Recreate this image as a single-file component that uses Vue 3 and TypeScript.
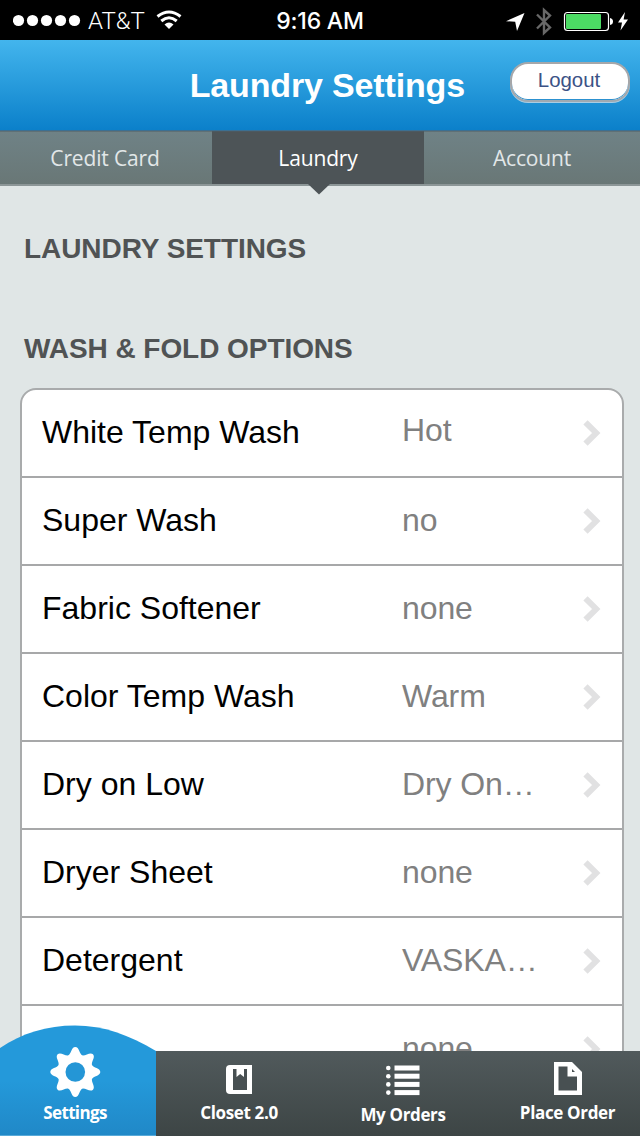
<script setup lang="ts">
interface Row { label: string; value: string }

const tabs: string[] = ['Credit Card', 'Laundry', 'Account']
const rows: Row[] = [
  { label: 'White Temp Wash', value: 'Hot' },
  { label: 'Super Wash', value: 'no' },
  { label: 'Fabric Softener', value: 'none' },
  { label: 'Color Temp Wash', value: 'Warm' },
  { label: 'Dry on Low', value: 'Dry On…' },
  { label: 'Dryer Sheet', value: 'none' },
  { label: 'Detergent', value: 'VASKA…' },
  { label: '', value: 'none' },
]
const petals: number[] = [0, 45, 90, 135, 180, 225, 270, 315]
</script>

<template>
  <div class="screen">
    <div class="status">
      <div class="carrier">
        <svg width="70" height="40" viewBox="0 0 70 40" fill="#fff">
          <circle v-for="n in 5" :key="n" :cx="n * 14 - 8.5" cy="20.5" r="5.6" />
        </svg>
        <span class="network">AT&amp;T</span>
        <svg class="wifi" width="26" height="40" viewBox="0 0 26 40" fill="none" stroke="#fff" stroke-width="3">
          <path d="M1.5 16.5Q13 7.5 24.5 16.5" />
          <path d="M5.3 21Q13 14.5 20.7 21" />
          <path d="M8.5 24.5Q13 20.7 17.5 24.5L13 29Z" fill="#fff" stroke="none" />
        </svg>
      </div>
      <span class="time">9:16 AM</span>
      <svg class="indicators" width="134" height="40" viewBox="506 0 134 40">
        <path d="M506 20.2L524.5 12L517 30L515.2 20.8Z" fill="#fff" />
        <path d="M537 13.5L550 26.5L544 32V9L550 14.5L537 27.5" fill="none" stroke="#686868" stroke-width="2.4" />
        <rect x="564.5" y="11.5" width="44" height="18" rx="3" fill="none" stroke="#fff" stroke-width="1.2" />
        <rect x="566" y="13" width="35" height="15" rx="1" fill="#4cdb64" />
        <path d="M610 17Q613 17.5 613 20.5Q613 23.5 610 24Z" fill="#fff" />
        <path d="M625 11L618 21.5H622L620.5 29.5L628 18.6H623.6Z" fill="#fff" />
      </svg>
    </div>

    <header class="header">
      <h1>Laundry Settings</h1>
      <button class="logout">Logout</button>
    </header>

    <nav class="tabs">
      <div v-for="(tab, i) in tabs" :key="tab" class="tab" :class="{ active: i === 1 }">
        <span>{{ tab }}</span>
        <svg v-if="i === 1" class="pointer" width="22" height="11" viewBox="0 0 22 11">
          <path d="M0 0H22L11 10.5Z" fill="#4d5457" />
        </svg>
      </div>
    </nav>

    <main class="content">
      <h2>LAUNDRY SETTINGS</h2>
      <h2 class="second">WASH &amp; FOLD OPTIONS</h2>
      <div class="list">
        <div v-for="(row, i) in rows" :key="i" class="row">
          <span class="label">{{ row.label }}</span>
          <span class="value">{{ row.value }}</span>
          <svg width="20" height="28" viewBox="0 0 20 28">
            <path d="M3.5 3.3L14.2 14L3.5 24.7" fill="none" stroke="#e1e1e2" stroke-width="6" />
          </svg>
        </div>
      </div>
    </main>

    <footer class="bottom">
      <div class="item settings">
        <svg class="dome" width="156" height="111" viewBox="0 0 156 111">
          <defs>
            <linearGradient id="blue" x1="0" y1="0" x2="0" y2="1">
              <stop offset="0" stop-color="#2499da" />
              <stop offset=".5" stop-color="#2499da" />
              <stop offset="1" stop-color="#2088c7" />
            </linearGradient>
          </defs>
          <path d="M0 23C22 8 47 .5 75 .5C104 .5 129 10 156 26V111H0Z" fill="url(#blue)" />
          <path d="M0 110.5H156" stroke="#58aad9" />
          <g transform="translate(75.3 47)">
            <path
              v-for="a in petals" :key="a" :transform="'rotate(' + a + ')'"
              d="M-7.2 -16.5C-4 -18 -4 -25 0 -25C4 -25 4 -18 7.2 -16.5L0 0Z" fill="#fff"
            />
            <circle r="17" fill="#fff" />
            <circle r="9.8" fill="#2496d6" />
          </g>
        </svg>
        <span class="nav-label">Settings</span>
      </div>
      <div class="item closet">
        <svg width="26" height="30" viewBox="0 0 26 30">
          <path d="M4 0H26V29H4Q0 29 0 25V4Q0 0 4 0Z" fill="#fff" />
          <path d="M7 4H10.5V12L14.2 9L18 12V4H21V25H7Z" fill="#485052" />
        </svg>
        <span class="nav-label">Closet 2.0</span>
      </div>
      <div class="item orders">
        <svg width="35" height="31" viewBox="0 0 35 31" fill="#fff">
          <g v-for="n in 4" :key="n" :transform="'translate(0 ' + (n - 1) * 8.2 + ')'">
            <circle cx="2.3" cy="3" r="2.3" />
            <rect x="8.5" y=".5" width="25" height="5" />
          </g>
        </svg>
        <span class="nav-label">My Orders</span>
      </div>
      <div class="item place">
        <svg width="28" height="33" viewBox="0 0 28 33">
          <path d="M0 0H18L28 10V33H0Z" fill="#fff" />
          <path d="M4.5 4.5H13.5V14.5H23V28.5H4.5Z" fill="#485052" />
          <path d="M18 7L21 10H18Z" fill="#485052" />
        </svg>
        <span class="nav-label">Place Order</span>
      </div>
    </footer>
  </div>
</template>

<style>
body { margin: 0; overflow: hidden; }
</style>

<style scoped>
.screen {
  position: relative;
  width: 640px;
  height: 1136px;
  overflow: hidden;
  display: flex;
  flex-direction: column;
  background: #e0e6e6;
  font-family: "Liberation Sans", Arial, sans-serif;
}
.status {
  height: 40px;
  flex: none;
  display: grid;
  grid-template-columns: 1fr auto 1fr;
  align-items: center;
  background: #000;
  color: #fff;
  line-height: 40px;
}
.carrier { display: flex; padding-left: 13px; }
.network { width: 68px; padding-left: 5px; font: 300 24px/42px Roboto, sans-serif; letter-spacing: 0; }
.time { font: 500 23px/42px Inter, sans-serif; letter-spacing: -0.2px; }
.indicators { justify-self: end; }
.header {
  height: 91px;
  flex: none;
  box-sizing: border-box;
  border-bottom: 1px solid #3c6f91;
  display: flex;
  justify-content: flex-end;
  background: linear-gradient(#43b5ed, #0b80ca);
}
h1 { margin: 0 45px 0 0; font-size: 34px; line-height: 90px; color: #fff; letter-spacing: -.15px; white-space: nowrap; }
.logout {
  width: 120px;
  height: 40px;
  margin: 22px 10px 0 0;
  padding: 0 2px 4px 0;
  border: 2px solid #a5a7aa;
  border-bottom-color: #9fa9b1;
  border-radius: 18px;
  background: #fff;
  box-shadow: inset 0 -1px 0 #2c91d0, 0 1px 0 #a9cce3;
  color: #3b5286;
  font: 20.4px/32px "Liberation Sans", Arial, sans-serif;
}
.tabs { height: 55px; flex: none; display: flex; position: relative; z-index: 1; }
.tab {
  position: relative;
  width: 212px;
  box-sizing: border-box;
  display: flex;
  justify-content: center;
  border-top: 1px solid #607075;
  border-bottom: 2px solid #8c9697;
  background: linear-gradient(#6f8286, #697776);
  color: #e2e7e8;
  font: 21px/52px "Open Sans", sans-serif;
  letter-spacing: -.15px;
}
.tab:first-child { padding-right: 2px; }
.tab:last-child { width: 216px; }
.tab.active { background: #4d5457; border-top-color: #4d5960; color: #fff; }
.pointer { position: absolute; left: 96px; top: 52px; }
.content { display: flex; flex-direction: column; }
h2 { margin: 47px 0 0 24px; font-size: 28px; line-height: 32px; color: #505354; letter-spacing: -.06px; white-space: nowrap; }
h2.second { margin-top: 68px; }
.list {
  width: 604px;
  box-sizing: border-box;
  margin: 23px 0 0 20px;
  border: 2px solid #a9abac;
  border-radius: 16px;
  background: #fff;
  overflow: hidden;
}
.row {
  height: 88px;
  box-sizing: border-box;
  display: flex;
  align-items: center;
  padding-left: 20px;
  border-bottom: 2px solid #a7a8a9;
  font-size: 32px;
  line-height: 36px;
}
.label { width: 360px; margin-top: -2px; color: #000; }
.value { width: 180px; margin-top: -2px; color: #808080; letter-spacing: -.1px; }
.row:first-child .value { margin-top: -6px; }
.bottom {
  position: absolute;
  left: 0;
  right: 0;
  bottom: 0;
  height: 85px;
  display: flex;
  background: linear-gradient(#515a5c, #3d4545);
  color: #fff;
}
.item { box-sizing: border-box; display: flex; flex-direction: column; align-items: center; }
.item svg { flex: none; }
.settings { width: 156px; position: relative; padding-top: 50px; padding-right: 6px; }
.dome { position: absolute; left: 0; bottom: 0; }
.settings .nav-label { position: relative; letter-spacing: -.65px; }
.closet { width: 166px; padding-top: 14px; }
.orders { width: 162px; padding-top: 14px; }
.place { width: 156px; padding: 11px 0 0 11px; }
.nav-label { font: 700 17px/24px "Open Sans", sans-serif; letter-spacing: -.35px; white-space: nowrap; }
.closet .nav-label { margin-top: 6px; }
.orders .nav-label { margin-top: 7px; }
.place .nav-label { margin-top: 6px; }
</style>
